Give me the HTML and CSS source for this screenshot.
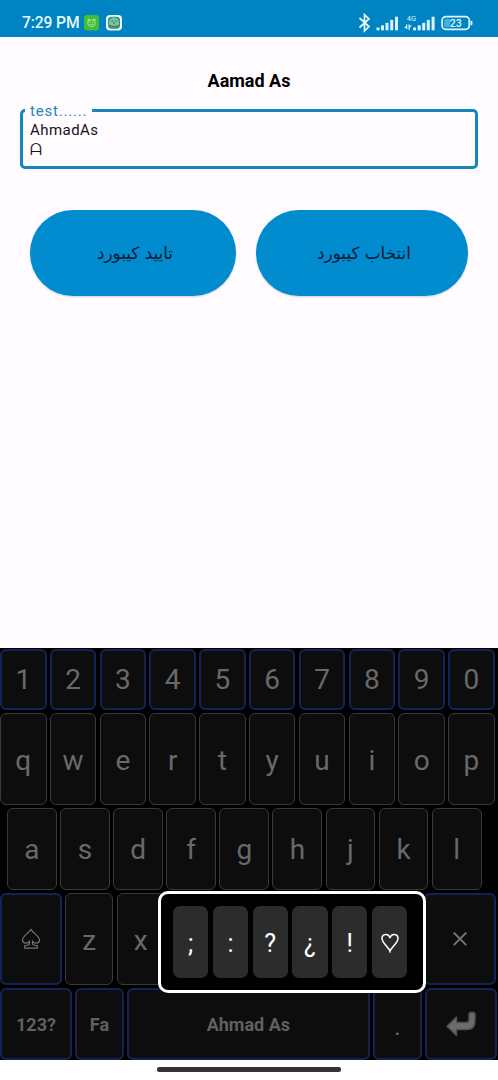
FILE: index.html
```
<!DOCTYPE html>
<html lang="en">
<head>
<meta charset="utf-8">
<title>Aamad As</title>
<link rel="stylesheet" href="styles.css">
</head>
<body>
<header class="status">
  <span class="clock">7:29 PM</span>
  <svg class="app-icon" width="15" height="16" viewBox="0 0 15 16"><rect width="15" height="15.5" rx="3" fill="#43bd35"/><g fill="none" stroke="#b9f3ad" stroke-width=".8"><ellipse cx="7.5" cy="8.2" rx="3.8" ry="3.4"/><path d="M4.2 6 3.9 4 6 4.900M10.800 6l.3-2L9 4.900M5.700 9q1.800 1.200 3.600 0M5.800 7.200h1M8.200 7.200h1"/></g></svg>
  <svg class="app-icon second" width="16" height="16" viewBox="0 0 16 16"><rect width="16" height="15.500" rx="4" fill="#e6fbff"/><rect x="2" y="1.700" width="12" height="12" rx="3.500" fill="#438b7c"/><circle cx="8" cy="7.600" r="5" fill="#72c9a5"/><path d="M4 10.500q4 3 8 0" stroke="#385c57" fill="none"/><path d="M5.500 6h1.500M9 6h1.500M8 7v2" stroke="#28665e"/><circle cx="8" cy="10.200" r="1" fill="#d39a45"/></svg>
  <span class="space"></span>
  <svg class="indicators" width="116" height="22" viewBox="0 0 116 22">
    <path d="M1.500 6 11 14.500 6.500 19V2.800L11 7 1.500 15.500" fill="none" stroke="#e8f8ff" stroke-width="1.700"/>
    <g fill="#d9f3ff">
      <rect x="18.500" y="15.500" width="3" height="2.800"/><rect x="23" y="13.300" width="3" height="5"/><rect x="27.500" y="10.800" width="3" height="7.500"/><rect x="32.200" y="7.900" width="3" height="10.400"/><rect x="37" y="4.700" width="3" height="13.600"/>
      <rect x="55" y="15.500" width="3" height="2.800"/><rect x="59.700" y="13.300" width="3" height="5"/><rect x="64.200" y="10.800" width="3" height="7.500"/><rect x="68.800" y="7.900" width="3" height="10.400"/><rect x="73.600" y="4.700" width="3" height="13.600"/>
      <path d="M48 12.500h1.300V17H48v-1h-2l2-2zM50.500 12.500h1.300v1h2l-2 2.300V18h-1.300z"/>
      <rect x="112.500" y="8.700" width="1.900" height="4.500" rx=".9"/>
    </g>
    <text x="53.500" y="9" class="net">4G</text>
    <rect x="84.100" y="4.700" width="27.200" height="12.600" rx="3.700" fill="none" stroke="#e3f7ff" stroke-width="1.700"/>
    <rect x="86.200" y="6.700" width="6" height="8.600" rx="1.800" fill="#43afe0"/>
    <text x="97.700" y="14.700" class="charge">23</text>
  </svg>
</header>
<main class="page">
  <h1 class="title">Aamad As</h1>
  <fieldset class="field">
    <legend class="label">test......</legend>
    <div class="value">AhmadAs</div>
    <div class="value carrier">ᗩ</div>
  </fieldset>
  <div class="actions">
    <button class="action" lang="fa" dir="rtl">تایید کیبورد</button>
    <button class="action" lang="fa" dir="rtl">انتخاب کیبورد</button>
  </div>
</main>
<section class="keyboard">
  <div class="row digits"><b class="key fn">1</b><b class="key fn">2</b><b class="key fn">3</b><b class="key fn">4</b><b class="key fn">5</b><b class="key fn">6</b><b class="key fn">7</b><b class="key fn">8</b><b class="key fn">9</b><b class="key fn">0</b></div>
  <div class="row top"><b class="key">q</b><b class="key">w</b><b class="key">e</b><b class="key">r</b><b class="key">t</b><b class="key">y</b><b class="key">u</b><b class="key">i</b><b class="key">o</b><b class="key">p</b></div>
  <div class="row home"><b class="key">a</b><b class="key">s</b><b class="key">d</b><b class="key">f</b><b class="key">g</b><b class="key">h</b><b class="key">j</b><b class="key">k</b><b class="key">l</b></div>
  <div class="row lower">
    <b class="key fn"><svg width="20" height="22" viewBox="0 0 20 22" fill="none" stroke="#747474" stroke-width="1.200" stroke-linejoin="round"><path d="M10 1.300C8.400 4.800 1.500 8 1.500 12c0 3.600 5.300 4.200 7 .9v2.400c0 1.900-1.100 2-4.800 2.200v2.700h12.600v-2.700c-3.700-.2-4.800-.3-4.800-2.200v-2.400c1.700 3.300 7 2.700 7-.9 0-4-6.900-7.200-8.500-10.700z"/></svg></b>
    <b class="key">z</b><b class="key">x</b><b class="key"></b><b class="key"></b><b class="key"></b><b class="key"></b><b class="key"></b>
    <b class="key fn"><svg width="16" height="16" viewBox="0 0 16 16"><path d="M1.700 1.500 14.300 14.100M14.300 1.500 1.700 14.100" stroke="#747474" stroke-width="1.900"/></svg></b>
  </div>
  <div class="row bottom">
    <b class="key fn word">123?</b><b class="key fn word">Fa</b><b class="key fn word">Ahmad As</b><b class="key fn dot">.</b>
    <b class="key fn"><svg width="32" height="26" viewBox="0 0 32 26"><path d="M2 15.200 11.500 6V11.500H21Q24 11.500 24 8.500V3.500Q24 1.200 27 1.200T30 3.500V10Q30 18.500 22 18.500H11.500V24.500Z" fill="#6c6c6c" stroke="#505050" stroke-width="1.500" stroke-linejoin="round"/></svg></b>
  </div>
  <div class="popup">
    <span class="alt">;</span><span class="alt">:</span><span class="alt">?</span><span class="alt">¿</span><span class="alt">!</span>
    <span class="alt"><svg width="18" height="20" viewBox="0 0 18 20"><path d="M9 18.300C8 14.500 1 10 1 5.500 1 .3 7.800-.1 9 5.200 10.200-.1 17 .3 17 5.500 17 10 10 14.500 9 18.300z" fill="none" stroke="#fff" stroke-width="1.500"/></svg></span>
  </div>
</section>
<footer class="nav"><span class="handle"></span></footer>
</body>
</html>
```
FILE: styles.css
```
* { box-sizing: border-box; }
body { margin: 0; width: 498px; height: 1080px; display: flex; flex-direction: column; overflow: hidden; background: #fffbff; font-family: Roboto, "Liberation Sans", sans-serif; }
.status { height: 37px; flex: none; background: #0083c3; color: #e8f8ff; display: flex; align-items: center; padding: 9px 24px 0 22px; }
.clock { font-size: 15.6px; font-weight: 500; line-height: 20px; width: 62px; white-space: nowrap; letter-spacing: -.1px; }
.app-icon { display: block; }
.second { margin-left: 7px; }
.space { flex: 1; }
.indicators { display: block; }
.net { font-size: 7.5px; fill: #d9f3ff; text-anchor: middle; }
.charge { font-size: 10.5px; font-weight: 500; fill: #e8f8ff; text-anchor: middle; }
.page { flex: none; height: 611px; padding: 33px 20px 0; }
.title { margin: 0; font-size: 18px; line-height: 22px; font-weight: 700; text-align: center; color: #000; }
.field { margin: 9px 0 0; height: 68px; border: 3px solid #1487bb; border-radius: 5px; padding: 0 7px; min-width: 0; color: #161418; }
.label { margin-left: -5px; padding: 1px 5px 0 5px; font-size: 15px; line-height: 18px; letter-spacing: .8px; color: #2388b6; }
.value { font-size: 15px; line-height: 20px; letter-spacing: .45px; }
.carrier { font-family: "DejaVu Sans", sans-serif; font-size: 14px; line-height: 19px; transform: scaleY(1.12); }
.actions { display: grid; grid-template-columns: 206px 212px; gap: 20px; padding: 41px 10px 0; }
.action { height: 86px; border: 0; border-radius: 43px; background: #008ccf; color: #081a35; font: 16.8px "DejaVu Sans", sans-serif; padding: 0 0 0 4px; box-shadow: 0 1px 2px rgba(0, 50, 90, .2); }
.keyboard { position: relative; flex: none; height: 412px; background: #000; color: #696969; display: flex; flex-direction: column; gap: 3px; padding-top: 1px; }
.row { display: grid; column-gap: 3.3px; }
.digits { height: 61px; grid-template-columns: repeat(10, 46.5px); }
.top { height: 92px; grid-template-columns: repeat(10, 46.5px); }
.home { height: 82px; grid-template-columns: repeat(9, 49.8px); padding-left: 7px; }
.lower { height: 92px; grid-template-columns: 62px repeat(7, 48px) 71.5px; }
.bottom { height: 72px; grid-template-columns: 72px 48.5px 243px 48.5px 72px; column-gap: 3.2px; }
.key { display: flex; align-items: center; justify-content: center; border: 1px solid #393939; border-radius: 6px; background: #0d0d0d; font-size: 28px; font-weight: 400; line-height: 1; min-width: 0; }
.top .key, .lower .key:not(.fn) { padding-top: 3px; }
.home .key { padding-top: 2px; }
.fn { border: 2px solid #152254; }
.word { font-size: 18px; font-weight: 700; color: #606060; padding-top: 1px; }
.dot { font-size: 24px; padding-top: 5px; }
.popup { position: absolute; left: 158px; top: 243px; width: 268px; height: 102px; border: 3px solid #fff; border-radius: 10px; background: #000; padding: 12px; display: grid; grid-template-columns: repeat(6, 35.3px); column-gap: 4.5px; align-content: start; }
.alt { height: 72px; border-radius: 7px; background: #2c2c2c; color: #fff; font-size: 25px; padding-top: 2px; display: flex; align-items: center; justify-content: center; }
.nav { height: 20px; background: #fff; padding-top: 7px; display: flex; justify-content: center; }
.handle { width: 184px; height: 5px; border-radius: 2px; background: #333; }
```
